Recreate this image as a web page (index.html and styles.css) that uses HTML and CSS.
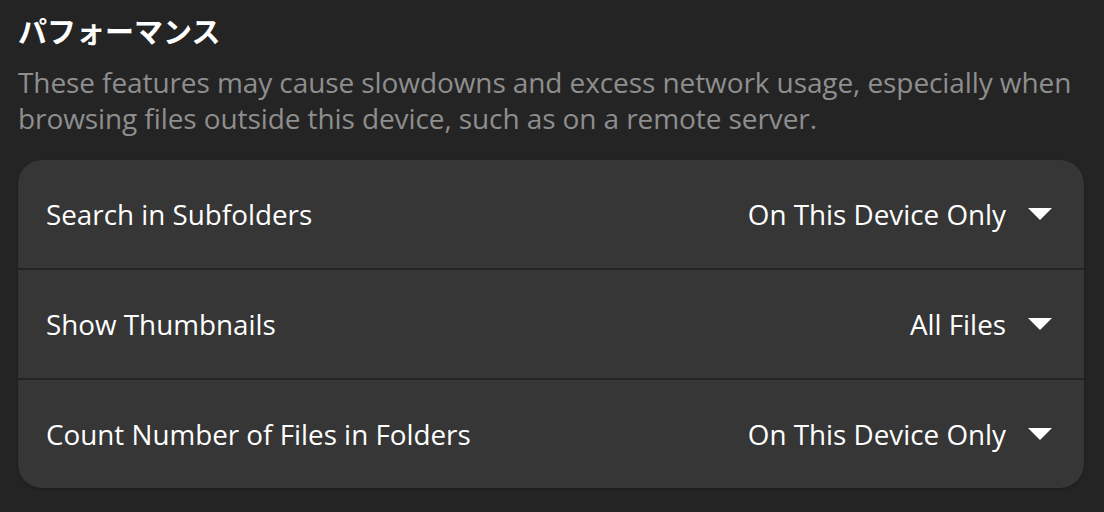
FILE: index.html
```html
<!DOCTYPE html>
<html lang="ja">
<head>
<meta charset="utf-8">
<link rel="stylesheet" href="styles.css">
</head>
<body>
<div class="page">
  <div class="group-header">
    <h2 class="title">パフォーマンス</h2>
    <p class="desc">These features may cause slowdowns and excess network usage, especially when browsing files outside this device, such as on a remote server.</p>
  </div>
  <div class="card">
    <div class="row">
      <span class="label">Search in Subfolders</span>
      <span class="value">On This Device Only<svg class="arrow" viewBox="0 0 24 12"><path d="M0 0H24L12 12Z" fill="#fff"/></svg></span>
    </div>
    <div class="row">
      <span class="label">Show Thumbnails</span>
      <span class="value">All Files<svg class="arrow" viewBox="0 0 24 12"><path d="M0 0H24L12 12Z" fill="#fff"/></svg></span>
    </div>
    <div class="row">
      <span class="label">Count Number of Files in Folders</span>
      <span class="value">On This Device Only<svg class="arrow" viewBox="0 0 24 12"><path d="M0 0H24L12 12Z" fill="#fff"/></svg></span>
    </div>
  </div>
</div>
</body>
</html>
```
FILE: styles.css
```css
html, body {
  margin: 0;
  padding: 0;
  background: #242424;
  width: 1104px;
  height: 512px;
  overflow: hidden;
}
body {
  font-family: "Open Sans", "Noto Sans CJK JP", sans-serif;
  color: #ffffff;
}
.page {
  padding: 12px 20px 0 18px;
}
.group-header {
  display: flex;
  flex-direction: column;
  gap: 16px;
  margin-bottom: 24px;
}
.title {
  margin: 0;
  font-family: "Noto Sans CJK JP", sans-serif;
  font-weight: 700;
  font-size: 29px;
  line-height: 36px;
}
.desc {
  margin: 0;
  color: #8e8e8e;
  font-size: 28px;
  line-height: 36px;
  letter-spacing: -0.09px;
}
.card {
  background: #363636;
  border-radius: 24px;
  display: flex;
  flex-direction: column;
  box-shadow: 0 1px 3px rgba(0,0,0,0.25);
}
.row {
  height: 108px;
  display: flex;
  align-items: center;
  justify-content: space-between;
  padding: 0 32px 0 28px;
  font-size: 27.8px;
}
.row + .row {
  border-top: 2px solid #242424;
}
.value {
  display: flex;
  align-items: center;
  gap: 22px;
}
.arrow {
  width: 24px;
  height: 12px;
}
```
